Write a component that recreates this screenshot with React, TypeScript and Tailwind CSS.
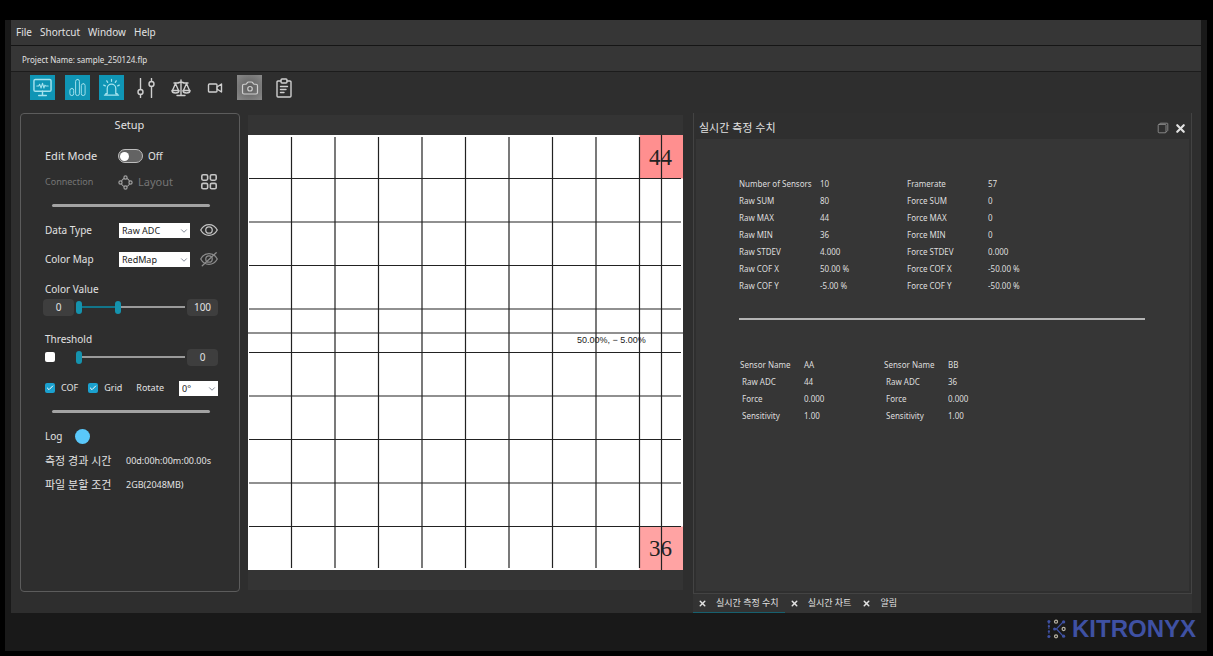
import { useState } from 'react'
import type { ReactNode } from 'react'
import { Camera, Check, ChevronDown, X } from 'lucide-react'

const GRID = 10
const CELL = 43.5

const rawStats = [
  ['Number of Sensors', '10', 'Framerate', '57'],
  ['Raw SUM', '80', 'Force SUM', '0'],
  ['Raw MAX', '44', 'Force MAX', '0'],
  ['Raw MIN', '36', 'Force MIN', '0'],
  ['Raw STDEV', '4.000', 'Force STDEV', '0.000'],
  ['Raw COF X', '50.00 %', 'Force COF X', '-50.00 %'],
  ['Raw COF Y', '-5.00 %', 'Force COF Y', '-50.00 %'],
]

const sensors = [
  { name: 'AA', adc: '44', force: '0.000', sensitivity: '1.00' },
  { name: 'BB', adc: '36', force: '0.000', sensitivity: '1.00' },
]

const tabs = ['실시간 측정 수치', '실시간 차트', '알림']

function Icon({ children, size = 20, width = 1.3 }: { children: ReactNode; size?: number; width?: number }) {
  return (
    <svg
      width={size}
      height={size}
      viewBox="0 0 20 20"
      fill="none"
      stroke="currentColor"
      strokeWidth={width}
      strokeLinecap="round"
      strokeLinejoin="round"
      aria-hidden="true"
    >
      {children}
    </svg>
  )
}

const tools = [
  {
    label: 'Monitor',
    active: true,
    icon: (
      <Icon size={19} width={1.5}>
        <rect x="1" y="1.500" width="18" height="12.500" rx="1.500" />
        <path d="M10 14v4M6 18.500h8" />
        <path d="M4 8.500h2l1-2 1.500 4L10 5.500l1.500 5 1-3 1 1h2.500" strokeWidth="1.100" />
      </Icon>
    ),
  },
  {
    label: 'Chart',
    active: true,
    icon: (
      <Icon size={19} width={1}>
        <rect x="2" y="11" width="4" height="7.500" rx="2" />
        <rect x="8" y="1.500" width="4" height="17" rx="2" />
        <rect x="14" y="6" width="4" height="12.500" rx="2" />
      </Icon>
    ),
  },
  {
    label: 'Alarm',
    active: true,
    icon: (
      <Icon size={19} width={1.3}>
        <path d="M2.500 18h15M4 18v-1.500h1.500V11a4.500 4.500 0 0 1 9 0v5.500H16V18" />
        <path d="M10 1.500v2M5 3l1 1.600M15 3l-1 1.600M1.800 7.500l1.700.8M18.200 7.500l-1.700.8" />
      </Icon>
    ),
  },
  {
    label: 'Adjust',
    icon: (
      <Icon width={1.4}>
        <path d="M4.500.500v11M4.500 16.500v3M15.500.500v3M15.500 8.500v11" />
        <circle cx="4.500" cy="14" r="2.500" />
        <circle cx="15.500" cy="6" r="2.500" />
      </Icon>
    ),
  },
  {
    label: 'Balance',
    icon: (
      <Icon width={1.4}>
        <path d="M10 2v15M6 17.500h8M3 5h3.500c1.500 0 2-1 3.500-1s2 1 3.500 1H17" />
        <path d="M4.500 5.500l-3 7M4.500 5.500l3 7M15.500 5.500l-3 7M15.500 5.500l3 7" />
        <path d="M1 12.500h7a3.500 2.500 0 0 1-7 0zM12 12.500h7a3.500 2.500 0 0 1-7 0z" />
      </Icon>
    ),
  },
  {
    label: 'Record',
    icon: (
      <Icon width={1.4}>
        <rect x="3.500" y="6" width="8.500" height="8" rx="1" />
        <path d="M12 9l4.500-3v8L12 11" />
      </Icon>
    ),
  },
  { label: 'Capture', hover: true, icon: <Camera size={18} strokeWidth={1.6} /> },
  {
    label: 'Report',
    icon: (
      <Icon width={1.4}>
        <path d="M7 3H4a1 1 0 0 0-1 1v14a1 1 0 0 0 1 1h12a1 1 0 0 0 1-1V4a1 1 0 0 0-1-1h-3" />
        <rect x="7" y="1" width="6" height="4" rx="1" />
        <path d="M6.500 8.500h7M6.500 11.500h5.500M6.500 14.500h3.500" />
      </Icon>
    ),
  },
]

function Toolbar() {
  return (
    <div className="h-[41px] pt-[3px] pl-[19px]">
      <div className="flex w-[267px] justify-between">
        {tools.map((tool) => {
          let look = 'text-[#cfcfcf]'
          if (tool.active) look = 'bg-[#0f95b5] text-[#a5e3ee]'
          if (tool.hover) look = 'bg-[radial-gradient(circle,#5c5c5c,#8a8a8a)] text-[#cfcfcf]'
          return (
            <button
              key={tool.label}
              aria-label={tool.label}
              className={`flex size-[25px] items-center justify-center ${look}`}
            >
              {tool.icon}
            </button>
          )
        })}
      </div>
    </div>
  )
}

function SelectBox({ id, options, className }: { id: string; options: string[]; className: string }) {
  return (
    <div className={`relative ${className}`}>
      <select
        id={id}
        className="block h-[15px] w-full appearance-none bg-white pl-[3px] text-[9px] leading-[15px] text-[#222]"
      >
        {options.map((o) => (
          <option key={o}>{o}</option>
        ))}
      </select>
      <ChevronDown size={10} className="pointer-events-none absolute top-[3px] right-px text-gray-500" />
    </div>
  )
}

function CheckBox({ id, label, checked }: { id: string; label?: string; checked: boolean }) {
  return (
    <span className="flex items-center gap-[6px]">
      <span className="relative flex size-[10px]">
        <input
          id={id}
          type="checkbox"
          defaultChecked={checked}
          aria-label={label ? undefined : 'Enable threshold'}
          className="peer size-[10px] appearance-none rounded-xs bg-white checked:bg-[#1ba1cf]"
        />
        <Check
          size={8}
          strokeWidth={3}
          className="pointer-events-none absolute top-px left-px hidden text-white peer-checked:block"
        />
      </span>
      {label && <label htmlFor={id}>{label}</label>}
    </span>
  )
}

const rangeStyle =
  'pointer-events-none absolute inset-0 h-4 w-full appearance-none bg-transparent [&::-webkit-slider-thumb]:pointer-events-auto [&::-webkit-slider-thumb]:h-[13px] [&::-webkit-slider-thumb]:w-[6px] [&::-webkit-slider-thumb]:appearance-none [&::-webkit-slider-thumb]:rounded-[3px] [&::-webkit-slider-thumb]:bg-[#1593ae]'

function Track({ children, fill = 0 }: { children: ReactNode; fill?: number }) {
  return (
    <div className="relative flex h-4 flex-1 items-center">
      <div className="h-[2px] flex-1 bg-[#9a9a9a]">
        <div className="h-full bg-[#12758a]" style={{ width: `${fill}%` }} />
      </div>
      {children}
    </div>
  )
}

function ValueBox({ children }: { children: ReactNode }) {
  return (
    <output className="flex h-[17px] w-[31px] items-center justify-center rounded-sm bg-[#3e3e3e] text-[10px]">
      {children}
    </output>
  )
}

function SetupPanel() {
  const [low, setLow] = useState(0)
  const [high, setHigh] = useState(38)
  const [threshold, setThreshold] = useState(0)
  const rule = <hr className="mr-2 ml-[7px] h-[3px] rounded-full border-0 bg-[#a3a3a3]" />

  return (
    <section className="mb-[21px] w-[220px] shrink-0 rounded border border-[#5c5c5c] pr-[21px] pl-6 text-[10px]">
      <h2 className="h-[22px] pr-1 text-center text-[11px] leading-[22px]">Setup</h2>

      <div className="mt-2 flex h-6 items-center text-[11px]">
        <label htmlFor="edit-mode" className="w-[73px]">
          Edit Mode
        </label>
        <input
          id="edit-mode"
          type="checkbox"
          role="switch"
          className="flex h-[14px] w-[25px] appearance-none items-center rounded-full border border-[#bdbdbd] bg-[#636363] px-px before:size-[9px] before:rounded-full before:bg-white checked:justify-end"
        />
        <span className="ml-[5px] text-[10px]">Off</span>
      </div>
      <div className="flex h-7 items-center text-[#757575]">
        <button className="w-[73px] text-left text-[9px]" disabled>
          Connection
        </button>
        <button className="flex items-center gap-[5px] text-[11px]" disabled>
          <Icon size={15} width={1.6}>
            <g className="text-[#a0a0a0]" stroke="currentColor">
              <circle cx="10" cy="10" r="5.500" />
              <g fill="#2e2e2e">
                <circle cx="10" cy="3.300" r="2.100" />
                <circle cx="10" cy="16.700" r="2.100" />
                <circle cx="3.300" cy="10" r="2.100" />
                <circle cx="16.700" cy="10" r="2.100" />
              </g>
            </g>
          </Icon>
          Layout
        </button>
        <button aria-label="Arrange" className="ml-auto text-[#c4c4c4]">
          <Icon size={18} width={1.8}>
            <rect x="2" y="2" width="6.500" height="6" rx="1.500" />
            <rect x="11.500" y="2" width="6.500" height="6" rx="1.500" />
            <rect x="2" y="11.500" width="6.500" height="6" rx="1.500" />
            <rect x="11.500" y="11.500" width="6.500" height="6" rx="1.500" />
          </Icon>
        </button>
      </div>

      <div className="pt-[8px]">{rule}</div>

      <div className="mt-[9px] flex h-7 items-center">
        <label htmlFor="data-type" className="w-[74px]">
          Data Type
        </label>
        <SelectBox id="data-type" options={['Raw ADC', 'Force']} className="w-[71px]" />
        <button aria-label="Show values" className="ml-auto text-[#c4c4c4]">
          <Icon size={18} width={1.4}>
            <path d="M.8 10C3 6 6.200 4 10 4s7 2 9.200 6c-2.200 4-5.400 6-9.200 6S3 14 .8 10z" />
            <circle cx="10" cy="10" r="3.600" />
          </Icon>
        </button>
      </div>
      <div className="mt-px flex h-7 items-center">
        <label htmlFor="color-map" className="w-[74px]">
          Color Map
        </label>
        <SelectBox id="color-map" options={['RedMap', 'BlueMap']} className="w-[71px]" />
        <button aria-label="Hide color map" className="ml-auto text-[#8c8c8c]">
          <Icon size={18} width={1.4}>
            <path d="M.8 10C3 6 6.200 4 10 4s7 2 9.200 6c-2.200 4-5.400 6-9.200 6S3 14 .8 10z" />
            <circle cx="10" cy="10" r="3.600" />
            <path d="M2.500 17.500L18 3" />
          </Icon>
        </button>
      </div>

      <h3 className="mt-[6px] h-5 leading-5">Color Value</h3>
      <div className="-ml-[2px] flex h-4 items-center gap-[2px]">
        <ValueBox>{low}</ValueBox>
        <Track fill={high}>
          <input
            type="range"
            aria-label="Color minimum"
            value={low}
            onChange={(e) => setLow(Number(e.target.value))}
            className={rangeStyle}
          />
          <input
            type="range"
            aria-label="Color maximum"
            value={high}
            onChange={(e) => setHigh(Number(e.target.value))}
            className={rangeStyle}
          />
        </Track>
        <ValueBox>100</ValueBox>
      </div>

      <h3 className="mt-[14px] h-5 leading-5">Threshold</h3>
      <div className="flex h-4 items-center gap-[2px]">
        <div className="w-[29px]">
          <CheckBox id="threshold-on" checked={false} />
        </div>
        <Track>
          <input
            type="range"
            aria-label="Threshold"
            value={threshold}
            onChange={(e) => setThreshold(Number(e.target.value))}
            className={rangeStyle}
          />
        </Track>
        <ValueBox>{threshold}</ValueBox>
      </div>

      <div className="mt-[15px] flex h-4 items-center gap-[10px] text-[9px]">
        <CheckBox id="cof" label="COF" checked />
        <CheckBox id="grid" label="Grid" checked />
        <label htmlFor="rotate" className="ml-auto">
          Rotate
        </label>
        <SelectBox id="rotate" options={['0°', '90°', '180°', '270°']} className="ml-[5px] w-[39px]" />
      </div>

      <div className="pt-[14px]">{rule}</div>

      <div className="mt-[13px] flex h-5 items-center">
        <span className="w-[30px]">Log</span>
        <button aria-label="Start log" className="size-[15px] rounded-full bg-[#5ac8fa]" />
      </div>
      <dl className="mt-[3px] grid grid-cols-[81px_1fr] text-[9px] leading-6">
        <dt className="text-[11px]">측정 경과 시간</dt>
        <dd>00d:00h:00m:00.00s</dd>
        <dt className="text-[11px]">파일 분할 조건</dt>
        <dd>2GB(2048MB)</dd>
      </dl>
    </section>
  )
}

function HeatMap() {
  const lines = Array.from({ length: GRID - 1 }, (_, i) => (i + 1) * CELL)
  return (
    <section className="mt-[2px] mb-[23px] flex min-w-0 flex-[435_1_0] items-center bg-[#343434]">
      <svg viewBox="0 0 435 435" className="block w-full bg-white" role="img" aria-label="Sensor heat map">
        <rect x="391.500" y="0" width="43.500" height="43.500" fill="#ff8f8f" />
        <rect x="391.500" y="391.500" width="43.500" height="43.500" fill="#ffa3a3" />
        <g stroke="#222" strokeWidth="1.200">
          {lines.map((p) => (
            <path key={p} d={`M${p} 2V433M1 ${p}H433`} />
          ))}
          <path d="M413.500 0V435M0 198H435" />
        </g>
        <g fill="#222" textAnchor="middle" fontFamily="'Liberation Serif', serif" fontSize="23">
          <text x="412.500" y="30">
            44
          </text>
          <text x="412.500" y="421">
            36
          </text>
        </g>
        <text x="329" y="208" fill="#222" fontFamily="'Liberation Sans', sans-serif" fontSize="9">
          50.00%, − 5.00%
        </text>
      </svg>
    </section>
  )
}

function ReadingsPanel() {
  return (
    <section className="flex min-w-0 flex-[499_1_0] flex-col">
      <div className="flex flex-1 flex-col border border-t-0 border-[#434343] bg-[#2f2f2f] px-[2px] pb-[2px]">
        <header className="flex h-[26px] items-center pt-1 pr-[2px] pl-[3px]">
          <h2 className="text-[11px]">실시간 측정 수치</h2>
          <button aria-label="Float panel" className="ml-auto text-[#8e8e8e]">
            <Icon size={12} width={1.5}>
              <rect x="2" y="4" width="13" height="14" rx="1.500" />
              <path d="M4 4l1.500-2H17a1 1 0 0 1 1 1v11l-3 3" />
            </Icon>
          </button>
          <button aria-label="Close panel" className="ml-[5px]">
            <X size={13} strokeWidth={4} />
          </button>
        </header>

        <div className="flex-1 bg-[#363636] pt-9 pr-11 pl-[43px] text-[8px] text-[#dedede]">
          <table className="w-full table-fixed">
            <tbody>
              {rawStats.map((row) => (
                <tr key={row[0]} className="h-[17px]">
                  <th scope="row" className="w-[81px] p-0 text-left font-normal whitespace-nowrap">
                    {row[0]}
                  </th>
                  <td className="w-[87px] p-0">{row[1]}</td>
                  <th scope="row" className="w-[81px] p-0 text-left font-normal">
                    {row[2]}
                  </th>
                  <td className="p-0">{row[3]}</td>
                </tr>
              ))}
            </tbody>
          </table>

          <hr className="mt-6 h-[2px] border-0 bg-[#b4b4b4]" />

          <div className="mt-9 ml-px flex gap-[39px]">
            {sensors.map((s) => (
              <table key={s.name} className="w-[105px] table-fixed">
                <tbody>
                  <tr className="h-[17px]">
                    <th scope="row" className="w-16 p-0 text-left font-normal whitespace-nowrap">
                      Sensor Name
                    </th>
                    <td className="p-0">{s.name}</td>
                  </tr>
                  <tr className="h-[17px]">
                    <th scope="row" className="p-0 pl-[2px] text-left font-normal">
                      Raw ADC
                    </th>
                    <td className="p-0">{s.adc}</td>
                  </tr>
                  <tr className="h-[17px]">
                    <th scope="row" className="p-0 pl-[2px] text-left font-normal">
                      Force
                    </th>
                    <td className="p-0">{s.force}</td>
                  </tr>
                  <tr className="h-[17px]">
                    <th scope="row" className="p-0 pl-[2px] text-left font-normal">
                      Sensitivity
                    </th>
                    <td className="p-0">{s.sensitivity}</td>
                  </tr>
                </tbody>
              </table>
            ))}
          </div>
        </div>
      </div>

      <nav className="flex h-[19px] bg-[#333] text-[9px]">
        {tabs.map((tab, i) => (
          <div
            key={tab}
            className={`flex items-center gap-[9px] border-b pr-[6px] pl-[5px] ${i === 0 ? 'border-[#17606f]' : 'border-transparent'}`}
          >
            <button aria-label={`Close ${tab}`}>
              <X size={9} strokeWidth={4} />
            </button>
            <button>{tab}</button>
          </div>
        ))}
      </nav>
    </section>
  )
}

function Logo() {
  return (
    <div className="flex h-[38px] items-center justify-end gap-[6px] pr-[5px] pb-[6px] text-[#3f51a3]">
      <svg width="19" height="20" viewBox="0 0 20 20" fill="none" stroke="currentColor" aria-hidden="true">
        <path d="M2 2v16" strokeWidth="1" strokeDasharray="3 2" />
        <path d="M8 10h2l7-7.500M10 10l7 7.500" strokeWidth="1.300" />
        <g fill="currentColor" stroke="none">
          <circle cx="2" cy="2" r="1.600" />
          <circle cx="2" cy="7" r="1.200" />
          <circle cx="2" cy="12.500" r="1.200" />
          <circle cx="2" cy="18" r="1.600" />
          <circle cx="8" cy="10" r="1.600" />
          <circle cx="17.500" cy="2.500" r="1.700" />
          <circle cx="17.500" cy="17.500" r="1.700" />
        </g>
        <g stroke="#b8b3a4" strokeWidth="1.300">
          <circle cx="9.500" cy="2.300" r="1.600" />
          <circle cx="17.500" cy="10" r="1.600" />
          <circle cx="9.500" cy="17.700" r="1.600" />
        </g>
      </svg>
      <span className="font-['Liberation_Sans',sans-serif] text-[24px] leading-6 font-bold">KITRONYX</span>
    </div>
  )
}

export default function App() {
  return (
    <div className="flex min-h-screen flex-col bg-black pt-5 pr-[6px] pb-[5px] pl-[5px] font-['Noto_Sans','Noto_Sans_CJK_KR',sans-serif] text-[#e2e2e2]">
      <div className="flex flex-1 flex-col bg-[#191919] px-[6px]">
        <div className="flex flex-1 flex-col bg-[#2e2e2e]">
          <nav className="flex h-[26px] items-center gap-2 border-b border-[#151515] bg-[#363636] pl-[5px] text-[10px]">
            <button>File</button>
            <button>Shortcut</button>
            <button>Window</button>
            <button>Help</button>
          </nav>
          <div className="h-[26px] border-b border-[#1c1c1c] bg-[#363636] pl-[11px] text-[8px] leading-[27px]">
            Project Name: sample_250124.flp
          </div>
          <Toolbar />
          <main className="flex flex-1 pr-[9px] pl-[9px]">
            <SetupPanel />
            <div className="w-2 shrink-0" />
            <HeatMap />
            <div className="w-[10px] shrink-0" />
            <ReadingsPanel />
          </main>
        </div>
        <Logo />
      </div>
    </div>
  )
}
